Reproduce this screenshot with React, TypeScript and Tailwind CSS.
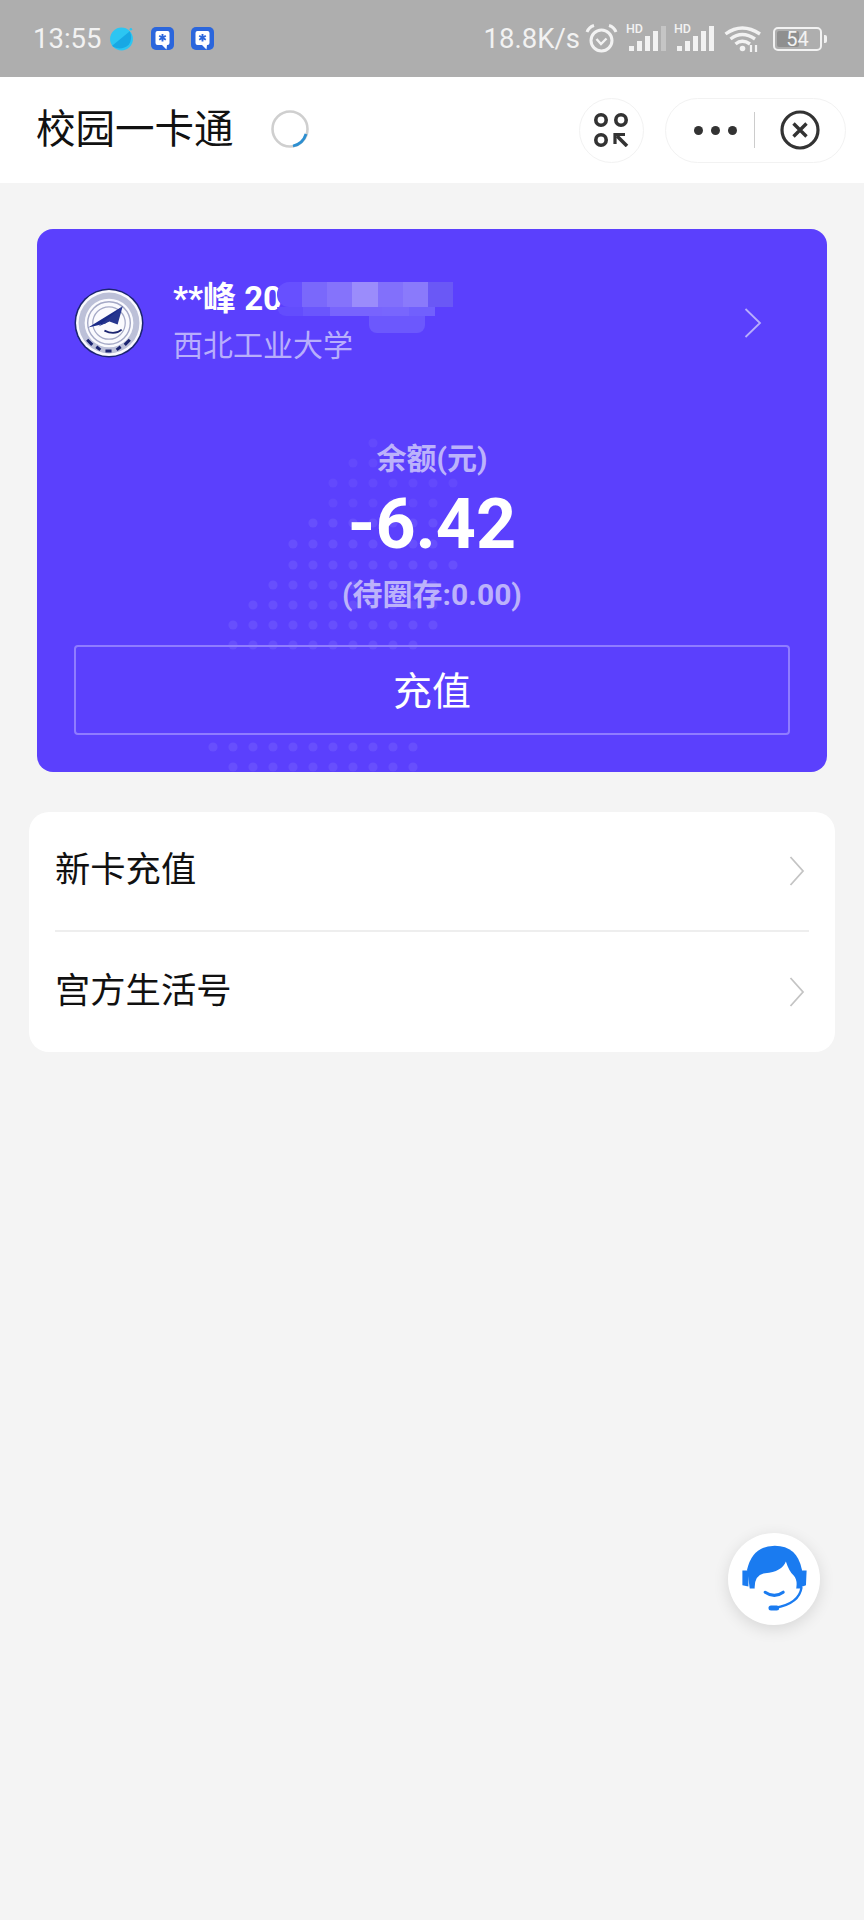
import React from "react";

const font = { fontFamily: 'Roboto, "Noto Sans CJK SC", sans-serif' };

function Planet() {
  return (
    <svg width="25" height="25" viewBox="0 0 24 24">
      <circle cx="12" cy="12.5" r="11" fill="#2cc6f2" />
      <path d="M3 19 L20 5 Q23 12 19 18 Q12 24 4 20Z" fill="#17a8e4" />
      <circle cx="21" cy="3" r="1.2" fill="#2cc6f2" />
    </svg>
  );
}

function TimIcon() {
  return (
    <svg width="23" height="24" viewBox="0 0 23 24">
      <rect x="0" y="0" width="23" height="23" rx="5" fill="#2b66dc" />
      <path d="M4.5 6 Q4.5 4 6.5 4 H16.5 Q18.5 4 18.5 6 V16 Q18.5 18 16.5 18 H16 L15.5 22.5 L11 18 H6.5 Q4.5 18 4.5 16Z" fill="#fff" />
      <path d="M11.5 7 V14.5 M8.2 8.8 L14.8 12.7 M14.8 8.8 L8.2 12.7" stroke="#2b66dc" strokeWidth="1.9" />
    </svg>
  );
}

function Alarm() {
  return (
    <svg width="33" height="30" viewBox="0 0 33 30" fill="none" stroke="#f2f2f2">
      <circle cx="16.5" cy="16.5" r="10.5" strokeWidth="3" />
      <path d="M11.5 15 L16 20 L21.5 14.5" strokeWidth="2.4" />
      <path d="M2 8 Q4 3 9 1.5 M31 8 Q29 3 24 1.5" strokeWidth="3" />
    </svg>
  );
}

function Signal({ dimLast }: { dimLast?: boolean }) {
  return (
    <div className="relative h-[27px] w-[40px]">
      <span className="absolute left-0 top-[-3px] text-[12.5px] font-medium leading-[14px] text-[#f2f2f2]">HD</span>
      <svg className="absolute left-0 top-0" width="40" height="27" viewBox="0 0 40 27">
        <rect x="3" y="21" width="5" height="5" fill="#f2f2f2" />
        <rect x="11" y="16" width="5" height="10" fill="#f2f2f2" />
        <rect x="19" y="11" width="5" height="15" fill="#f2f2f2" />
        <rect x="27" y="6" width="5" height="20" fill="#f2f2f2" />
        <rect x="35" y="1" width="5" height="25" fill="#f2f2f2" opacity={dimLast ? 0.35 : 1} />
      </svg>
    </div>
  );
}

function Wifi() {
  return (
    <svg width="38" height="28" viewBox="0 0 38 28" fill="none" stroke="#f2f2f2" strokeWidth="3.4">
      <path d="M1.5 9 Q18 -3 36 9" />
      <path d="M6.5 14 Q18 5 31 14" />
      <path d="M11.5 19 Q18 13.5 26 19" />
      <circle cx="18.5" cy="23.5" r="2.8" fill="#f2f2f2" stroke="none" />
      <path d="M27 27 V20 M32 20 V27" strokeWidth="2.2" />
    </svg>
  );
}

function Battery() {
  return (
    <div className="flex items-center gap-[2px]">
      <div className="relative flex h-[24px] w-[49px] items-center justify-center overflow-hidden rounded-[5px] border-2 border-[#f2f2f2]">
        <div className="absolute bottom-[2px] left-[2px] top-[2px] w-[22px] rounded-[2px] bg-[#8f8f8f]" />
        <span className="relative text-[20px] leading-none text-[#f2f2f2]">54</span>
      </div>
      <div className="h-[8px] w-[3px] rounded-r-[2px] bg-[#f2f2f2]" />
    </div>
  );
}

function Chevron({ color, w, h }: { color: string; w: number; h: number }) {
  return (
    <svg width={w} height={h} viewBox={`0 0 ${w} ${h}`} fill="none" stroke={color} strokeWidth="1.8">
      <path d={`M1.5 1 L${w - 2} ${h / 2} L1.5 ${h - 1}`} />
    </svg>
  );
}

function Seal() {
  return (
    <svg width="70" height="70" viewBox="0 0 69 69">
      <circle cx="34.5" cy="34.5" r="34" fill="#1c2570" />
      <circle cx="34.5" cy="34.5" r="32.5" fill="#fafafe" />
      <circle cx="34.5" cy="34.5" r="30" fill="#bcc0d8" />
      <circle cx="34.5" cy="34.5" r="24" fill="#fafafe" />
      <circle cx="34.5" cy="34.5" r="21" fill="none" stroke="#a5a9c6" strokeWidth="1.4" />
      <circle cx="34.5" cy="34.5" r="16" fill="none" stroke="#a5a9c6" strokeWidth="1.2" />
      <path d="M14 39 L48 18 L31 35 Z" fill="#1a2a88" />
      <path d="M24 38 L48 18 L43 36 L35 33Z" fill="#25358f" />
      <path d="M30 42 Q40 47 47 41" fill="none" stroke="#1c2570" strokeWidth="1.8" />
      <path d="M13 51 L18 56 M22 58 L26 61 M31 62 L37 62 M42 61 L46 58 M50 56 L55 51" stroke="#1c2570" strokeWidth="3" />
    </svg>
  );
}

function Dots() {
  const rows: [number, number, number][] = [
    [14, 373, 373], [34, 353, 373], [54, 333, 453], [74, 333, 433], [94, 313, 433], [115, 293, 433],
    [136, 293, 453], [156, 273, 433], [176, 253, 433], [196, 233, 433], [216, 233, 413],
    [318, 213, 413], [338, 233, 413],
  ];
  const dots: React.ReactNode[] = [];
  rows.forEach(([y, a, b]) => {
    for (let x = a; x <= b; x += 20) {
      dots.push(<circle key={`${x}-${y}`} cx={x - 37} cy={y} r="4.6" fill="#fff" opacity={y < 80 ? 0.05 : 0.08} />);
    }
  });
  return (
    <svg className="absolute left-0 top-[200px]" width="791" height="343" viewBox="0 0 791 343">
      {dots}
    </svg>
  );
}

function Mosaic() {
  const top = ["#6750ff", "#7a68fb", "#8573fb", "#9b8cfb", "#8270fb", "#8a7afb", "#6a58f6"];
  const bottom = ["#634dfd", "#6a56fd", "#7864fd", "#7864fd", "#7866fd", "#7160fd"];
  return (
    <div className="absolute left-[240px] top-[53px] w-[176px]">
      <div className="flex h-[25px] overflow-hidden rounded-l-[12px]">
        {top.map((c, i) => <div key={i} className="h-full flex-1" style={{ background: c }} />)}
      </div>
      <div className="flex h-[9px] w-[158px] overflow-hidden rounded-bl-[12px]">
        {bottom.map((c, i) => <div key={i} className="h-full flex-1" style={{ background: c }} />)}
      </div>
      <div className="ml-[92px] h-[17px] w-[56px] rounded-b-[8px] bg-[#6c58fd]" />
    </div>
  );
}

function Agent() {
  return (
    <svg width="92" height="92" viewBox="85 70 275 275">
      <path d="M142 180 Q158 108 225 108 Q292 108 306 180 L306 236 L150 236Z" fill="#1a7bf0" />
      <path d="M166 250 Q158 196 196 190 Q246 186 258 155 Q268 186 282 198 Q296 214 286 250 Q225 300 166 250Z" fill="#fff" />
      <path d="M128 182 H146 V230 L128 226Z M302 182 H320 L318 226 L302 232Z" fill="#1a7bf0" />
      <path d="M196 247 Q224 266 250 247" fill="none" stroke="#1a7bf0" strokeWidth="9" strokeLinecap="round" />
      <path d="M305 232 Q298 282 225 294" fill="none" stroke="#1a7bf0" strokeWidth="7" />
      <rect x="206" y="287" width="32" height="15" rx="7.5" fill="#1a7bf0" />
    </svg>
  );
}

function Row({ label, divider }: { label: string; divider?: boolean }) {
  return (
    <div className={`flex h-[120px] items-center justify-between ${divider ? "border-b-2 border-[#eeeeee]" : ""}`}>
      <span className="text-[35.3px] leading-none text-[#111]">{label}</span>
      <span className="mr-[4px]"><Chevron color="#c4c4c4" w={16} h={30} /></span>
    </div>
  );
}

export default function App() {
  return (
    <div className="relative h-[1920px] w-[864px] overflow-hidden bg-[#f4f4f4]" style={font}>
      <div className="flex h-[77px] items-center justify-between bg-[#aeaeae] pl-[33px] pr-[37px]">
        <div className="flex items-center">
          <span className="text-[27.5px] leading-none text-[#f2f2f2]">13:55</span>
          <span className="ml-[8px]"><Planet /></span>
          <span className="ml-[17px]"><TimIcon /></span>
          <span className="ml-[17px]"><TimIcon /></span>
        </div>
        <div className="flex items-center">
          <span className="text-[27.5px] leading-none text-[#f2f2f2]">18.8K/s</span>
          <span className="ml-[5px]"><Alarm /></span>
          <span className="ml-[8px]"><Signal dimLast /></span>
          <span className="ml-[8px]"><Signal /></span>
          <span className="ml-[10px]"><Wifi /></span>
          <span className="ml-[11px]"><Battery /></span>
        </div>
      </div>

      <div className="flex h-[106px] items-center justify-between bg-white pl-[36px] pr-[18px]">
        <div className="flex items-center">
          <span className="pb-[1px] text-[39.5px] leading-none text-[#111]">校园一卡通</span>
          <svg className="mb-[3px] ml-[37px]" width="38" height="38" viewBox="0 0 38 38" fill="none">
            <circle cx="19" cy="19" r="17.5" stroke="#cfcfcf" strokeWidth="2.6" />
            <path d="M35 24 A17.5 17.5 0 0 1 22 36" stroke="#2d8fd0" strokeWidth="2.8" />
          </svg>
        </div>
        <div className="flex items-center gap-[21px]">
          <div className="flex h-[65px] w-[65px] items-center justify-center rounded-full border border-[#f2f2f2]">
            <svg width="36" height="34" viewBox="0 0 36 34" fill="none" stroke="#333" strokeWidth="3.6">
              <circle cx="7" cy="7" r="5.2" />
              <circle cx="27" cy="7" r="5.2" />
              <circle cx="7" cy="27" r="5.2" />
              <path d="M23 23 L33 33" strokeWidth="3.6" />
              <path d="M21 31 V21.5 H31" strokeWidth="3.2" />
            </svg>
          </div>
          <div className="flex h-[65px] w-[181px] items-center rounded-full border border-[#f2f2f2]">
            <div className="ml-[28px] flex w-[43px] justify-between">
              <span className="h-[9px] w-[9px] rounded-full bg-[#333]" />
              <span className="h-[9px] w-[9px] rounded-full bg-[#333]" />
              <span className="h-[9px] w-[9px] rounded-full bg-[#333]" />
            </div>
            <div className="ml-[17px] h-[36px] w-px bg-[#cccccc]" />
            <svg className="ml-[25px]" width="40" height="40" viewBox="0 0 40 40" fill="none" stroke="#333">
              <circle cx="20" cy="20" r="18" strokeWidth="3.2" />
              <path d="M13.5 13.5 L26.5 26.5 M26.5 13.5 L13.5 26.5" strokeWidth="3.4" />
            </svg>
          </div>
        </div>
      </div>

      <div className="px-[29px] pt-[46px]">
        <div className="relative mx-[8px] h-[543px] overflow-hidden rounded-[16px] bg-[#5b40fd]">
          <Dots />
          <div className="relative px-[37px] pt-[50px]">
            <div className="flex items-center">
              <Seal />
              <div className="ml-[29px] flex-1">
                <div className="text-[33px] font-bold leading-[40px] text-white">**峰 20</div>
                <div className="mt-[7px] text-[30px] leading-[40px] text-[#b8aefc]">西北工业大学</div>
              </div>
              <span className="mr-[28px]"><Chevron color="#b8aefc" w={18} h={30} /></span>
            </div>
            <Mosaic />
            <div className="mt-[72px] text-center text-[30px] font-bold leading-[42px] text-[#bcb2fb]">余额(元)</div>
            <div className="mt-[11px] text-center text-[70px] font-bold leading-[66px] text-white">-6.42</div>
            <div className="mt-[17px] text-center text-[30px] font-bold leading-[42px] text-[#bcb2fb]">(待圈存:0.00)</div>
            <div className="mt-[29px] flex h-[90px] items-center justify-center rounded-[4px] border-2 border-[#8f7cff] pt-[4px] text-[39px] leading-none text-white">充值</div>
          </div>
        </div>

        <div className="mt-[40px] rounded-[20px] bg-white px-[26px]">
          <Row label="新卡充值" divider />
          <Row label="宫方生活号" />
        </div>
      </div>

      <div className="absolute left-[728px] top-[1533px] flex h-[92px] w-[92px] items-center justify-center rounded-full bg-white shadow-[0_4px_16px_rgba(0,0,0,0.12)]">
        <Agent />
      </div>
    </div>
  );
}
